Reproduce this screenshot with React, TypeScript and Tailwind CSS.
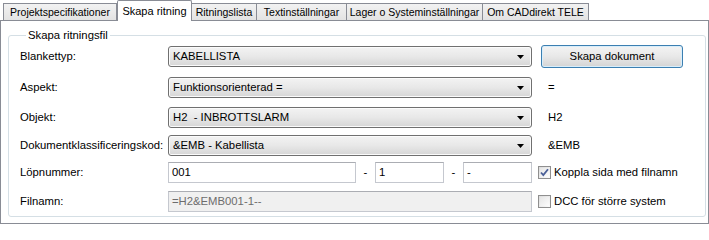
const tabs = [
  { label: "Projektspecifikationer", w: "w-[114px]" },
  { label: "Skapa ritning", w: "w-[75px]", active: true },
  { label: "Ritningslista", w: "w-[66px]" },
  { label: "Textinställningar", w: "w-[91px]" },
  { label: "Lager o Systeminställningar", w: "w-[137px]" },
  { label: "Om CADdirekt TELE", w: "w-[107px]" },
];

function Combo({ value }: { value: string }) {
  return (
    <div className="flex h-[21px] w-[364px] items-center rounded-[3px] border border-[#707070] bg-gradient-to-b from-[#f3f3f3] via-[#e8e8e8] to-[#d6d6d6] pl-[4px] pr-[6px] shadow-[inset_0_0_0_1px_#fbfbfb]">
      <span className="flex-1 truncate whitespace-pre">{value}</span>
      <svg width="7" height="4" viewBox="0 0 7 4" className="mr-[1px]">
        <path d="M0 0h7L3.5 4z" fill="#000" />
      </svg>
    </div>
  );
}

function TextBox({
  value,
  w,
  disabled,
}: {
  value: string;
  w: string;
  disabled?: boolean;
}) {
  return (
    <div
      className={`flex h-[21px] ${w} items-center border border-[#c5c8cf] border-t-[#abadb3] px-[3px] ${
        disabled ? "bg-[#f0f0f0] text-[#6d6d6d]" : "bg-white"
      }`}
    >
      {value}
    </div>
  );
}

function CheckBox({ checked, label }: { checked?: boolean; label: string }) {
  return (
    <div className="flex items-center gap-[3px]">
      <div className="flex h-[13px] w-[13px] items-center justify-center border border-[#8f8f8f] bg-gradient-to-br from-[#dcdcdc] to-[#fbfbfb] p-[1px]">
        <div className="flex h-full w-full items-center justify-center bg-gradient-to-br from-[#e6e6e6] to-[#fcfcfc]">
          {checked ? (
            <svg width="9" height="9" viewBox="0 0 9 9">
              <path d="M1 4.5l2.3 2.6L8 1.2" stroke="#4a5f97" strokeWidth="1.8" fill="none" />
            </svg>
          ) : null}
        </div>
      </div>
      <span>{label}</span>
    </div>
  );
}

function Row({
  label,
  className,
  children,
}: {
  label: string;
  className?: string;
  children: React.ReactNode;
}) {
  return (
    <div className={`flex items-center ${className ?? ""}`}>
      <span className="w-[148px] shrink-0">{label}</span>
      {children}
    </div>
  );
}

export default function App() {
  return (
    <div className="flex h-[224px] w-[709px] flex-col overflow-hidden bg-white font-['Liberation_Sans',Arial,sans-serif] text-[11.3px] leading-[13px] text-black">
      <div className="flex h-[20px] items-end pl-[3px] text-[10.5px]">
        {tabs.map((t) =>
          t.active ? (
            <div
              key={t.label}
              className={`relative z-10 -mb-px flex h-[21px] shrink-0 ${t.w} items-start justify-center whitespace-nowrap rounded-t-[2px] border border-b-0 border-[#898c95] bg-white pt-[4px] text-[11px]`}
            >
              {t.label}
            </div>
          ) : (
            <div
              key={t.label}
              className={`-ml-px flex h-[17px] shrink-0 ${t.w} items-center justify-center whitespace-nowrap border border-b-0 border-[#898c95] bg-gradient-to-b from-[#f2f2f2] to-[#e3e3e3] first:ml-0`}
            >
              {t.label}
            </div>
          )
        )}
      </div>
      <div className="flex-1 border border-[#898c95] bg-white pl-[7px] pr-[2px] pt-[8px]">
        <fieldset className="rounded-[3px] border border-[#d5dfe5] pb-[4px] pl-[11px]">
          <legend className="ml-[6px] px-[2px]">Skapa ritningsfil</legend>
          <div className="flex flex-col">
            <Row label="Blankettyp:" className="mt-[3px]">
              <Combo value="KABELLISTA" />
              <button
                type="button"
                className="ml-[9px] h-[23px] w-[142px] rounded-[3px] border border-[#3c7fb1] bg-gradient-to-b from-[#f4f4f4] via-[#e8e8e8] to-[#d4d4d4] shadow-[inset_0_0_0_1px_#d8eefb]"
              >
                Skapa dokument
              </button>
            </Row>
            <Row label="Aspekt:" className="mt-[9px]">
              <Combo value="Funktionsorienterad =" />
              <span className="ml-[16px]">=</span>
            </Row>
            <Row label="Objekt:" className="mt-[9px]">
              <Combo value="H2  - INBROTTSLARM" />
              <span className="ml-[16px]">H2</span>
            </Row>
            <Row label="Dokumentklassificeringskod:" className="mt-[7px]">
              <Combo value="&EMB - Kabellista" />
              <span className="ml-[16px]">&amp;EMB</span>
            </Row>
            <Row label="Löpnummer:" className="mt-[6px]">
              <TextBox value="001" w="w-[188px]" />
              <span className="w-[19px] text-center">-</span>
              <TextBox value="1" w="w-[69px]" />
              <span className="w-[19px] text-center">-</span>
              <TextBox value="-" w="w-[69px]" />
              <div className="ml-[6px]">
                <CheckBox checked label="Koppla sida med filnamn" />
              </div>
            </Row>
            <Row label="Filnamn:" className="mt-[8px]">
              <TextBox value="=H2&EMB001-1--" w="w-[364px]" disabled />
              <div className="ml-[6px]">
                <CheckBox label="DCC för större system" />
              </div>
            </Row>
          </div>
        </fieldset>
      </div>
    </div>
  );
}
